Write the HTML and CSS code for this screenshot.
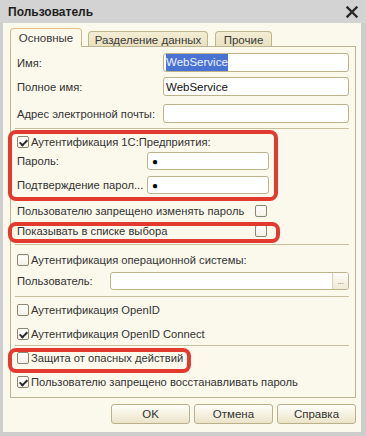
FILE: index.html
```html
<!DOCTYPE html>
<html lang="ru">
<head>
<meta charset="utf-8">
<title>Пользователь</title>
<link rel="stylesheet" href="styles.css">
</head>
<body>
<div class="window">
  <div class="titlebar">
    <span class="title">Пользователь</span>
    <svg class="close" width="12" height="12" viewBox="0 0 12 12"><path d="M1.5 1.5 L10.5 10.5 M10.5 1.5 L1.5 10.5" stroke="#2b2b2b" stroke-width="2.4" stroke-linecap="square"/></svg>
  </div>
  <div class="content">
    <div class="tabs">
      <div class="tab active">Основные</div>
      <div class="tab t2">Разделение данных</div>
      <div class="tab t3">Прочие</div>
    </div>
    <div class="panel">
      <div class="frow r1"><span class="label">Имя:</span><div class="input wide"><span class="sel">WebService</span></div></div>
      <div class="frow r2"><span class="label">Полное имя:</span><div class="input wide">WebService</div></div>
      <div class="frow r3"><span class="label">Адрес электронной почты:</span><div class="input wide"></div></div>
      <div class="sep s1"></div>
      <div class="crow r4"><span class="cb checked"></span><span>Аутентификация 1С:Предприятия:</span></div>
      <div class="frow r5"><span class="label">Пароль:</span><div class="input pwd"><span class="dot">●</span></div></div>
      <div class="frow r6"><span class="label">Подтверждение парол...</span><div class="input pwd"><span class="dot">●</span></div></div>
      <div class="crow lrow r7"><span class="ltext">Пользователю запрещено изменять пароль</span><span class="cb"></span></div>
      <div class="crow lrow r8"><span class="ltext">Показывать в списке выбора</span><span class="cb"></span></div>
      <div class="sep s2"></div>
      <div class="crow r9"><span class="cb"></span><span>Аутентификация операционной системы:</span></div>
      <div class="frow r10"><span class="label short">Пользователь:</span><div class="input os"><span class="fill"></span><span class="dots">...</span></div></div>
      <div class="sep s3"></div>
      <div class="crow r11"><span class="cb"></span><span>Аутентификация OpenID</span></div>
      <div class="crow r12"><span class="cb checked"></span><span>Аутентификация OpenID Connect</span></div>
      <div class="sep s4"></div>
      <div class="crow r13"><span class="cb"></span><span>Защита от опасных действий</span></div>
      <div class="crow r14"><span class="cb checked"></span><span>Пользователю запрещено восстанавливать пароль</span></div>
    </div>
    <div class="buttons">
      <div class="btn">OK</div>
      <div class="btn">Отмена</div>
      <div class="btn">Справка</div>
    </div>
  </div>
  <div class="mark m1"></div>
  <div class="mark m2"></div>
  <div class="mark m3"></div>
</div>
</body>
</html>
```
FILE: styles.css
```css
* { box-sizing: border-box; }
html, body { margin: 0; padding: 0; }
body {
  font-family: "Liberation Sans", Arial, sans-serif;
  font-size: 11.2px;
  color: #333;
  background: #ffffff;
}
.window {
  position: relative;
  width: 366px;
  height: 436px;
  background: #cdcdcd;
  padding: 0 5px 4px 3px;
  display: flex;
  flex-direction: column;
}
.titlebar {
  height: 23px;
  display: flex;
  align-items: center;
  justify-content: space-between;
  padding-top: 1px;
  background: #d3d3d3;
  margin: 0 -5px 0 -3px;
  padding-left: 8px;
  padding-right: 8px;
}
.title {
  font-weight: bold;
  font-size: 12px;
  color: #1e1e1e;
}
.close { display: block; }
.content {
  flex: 1;
  background: #fbf9ec;
  padding: 5px 5px 0 7px;
  display: flex;
  flex-direction: column;
}
.tabs {
  display: flex;
  align-items: flex-end;
  gap: 6px;
  height: 18px;
  position: relative;
  z-index: 1;
}
.tab {
  height: 15px;
  border: 1px solid #bdb58f;
  border-bottom: none;
  border-radius: 4px 4px 0 0;
  background: linear-gradient(#f3edd4, #e9e1c1);
  color: #3a3a3a;
  display: flex;
  align-items: center;
  justify-content: center;
  font-size: 11.5px;
  padding-top: 1px;
}
.tab.active {
  height: 19px;
  width: 72px;
  margin-bottom: -1px;
  background: #fbf9ec;
  border-color: #c9b98a;
  border-top: 1px solid #e2c27f;
  padding-top: 0;
}
.tab.t2 { width: 120px; }
.tab.t3 { width: 57px; margin-left: 1px; }
.panel {
  border: 1px solid #bdb58f;
  padding: 0 6px 7px 6px;
  display: flex;
  flex-direction: column;
  background: #fbf9ec;
}
.frow {
  display: flex;
  align-items: center;
  justify-content: space-between;
}
.label { white-space: nowrap; color: #333; }
.input {
  border: 1px solid #bcb38b;
  border-radius: 3px;
  background: #ffffff;
  height: 19px;
  display: flex;
  align-items: center;
  padding-left: 2px;
  color: #111;
  font-size: 11.5px;
}
.input.wide { width: 186px; }
.sel {
  background: #4a72d3;
  color: #eef2ff;
  padding: 1px 0 2px 0;
  line-height: 14px;
}
.input.pwd { width: 122px; height: 18px; margin-right: 80px; padding-left: 4px; }
.dot { font-size: 10px; color: #000; }
.input.os { width: 239px; height: 18px; padding: 0; overflow: hidden; }
.fill { flex: 1; }
.dots {
  width: 16px;
  height: 100%;
  border-left: 1px solid #d8d2b4;
  background: linear-gradient(#fdfcf6, #efead6);
  color: #9a9370;
  font-size: 9px;
  display: flex;
  align-items: flex-end;
  justify-content: center;
  padding-bottom: 3px;
  letter-spacing: -0.5px;
}
.crow {
  height: 16px;
  display: flex;
  align-items: center;
  gap: 2px;
  white-space: nowrap;
}
.lrow { justify-content: flex-start; }
.ltext { width: 236px; }
.cb {
  width: 12px;
  height: 12px;
  flex: none;
  border: 1px solid #8d8770;
  border-radius: 2px;
  background: linear-gradient(#ffffff, #f4f1e6);
  position: relative;
}
.cb.checked::after {
  content: "";
  position: absolute;
  left: 3px;
  top: 1px;
  width: 3px;
  height: 6px;
  border: solid #2a2a2a;
  border-width: 0 2px 2px 0;
  transform: rotate(45deg);
}
.sep {
  height: 1px;
  background: #c8c09c;
  margin-left: -2px;
}
.r1 { margin-top: 6px; }
.r2 { margin-top: 5px; }
.r3 { margin-top: 8px; }
.s1 { margin-top: 5px; }
.r4 { margin-top: 5px; }
.r5 { margin-top: 2px; }
.r6 { margin-top: 6px; }
.r7 { margin-top: 9px; }
.r8 { margin-top: 4px; }
.s2 { margin-top: 5px; }
.r9 { margin-top: 7px; }
.r10 { margin-top: 4px; }
.s3 { margin-top: 6px; }
.r11 { margin-top: 5px; }
.r12 { margin-top: 8px; }
.s4 { margin-top: 3px; }
.r13 { margin-top: 4px; }
.r14 { margin-top: 8px; }
.buttons {
  display: flex;
  justify-content: flex-end;
  gap: 4px;
  margin-top: 6px;
  padding-left: 101px;
}
.btn {
  width: 80px;
  height: 20px;
  border: 1px solid #bab18a;
  border-radius: 3px;
  background: linear-gradient(#fefefb, #f4efdc 60%, #ebe4c9);
  display: flex;
  align-items: center;
  justify-content: center;
  color: #333;
  font-size: 11.5px;
}
.mark {
  position: absolute;
  border: 4px solid #e23a2e;
  border-radius: 8px;
  pointer-events: none;
}
.m1 { left: 8px; top: 130px; width: 270px; height: 71px; }
.m2 { left: 8px; top: 222px; width: 272px; height: 21px; }
.m3 { left: 8px; top: 348px; width: 183px; height: 25px; }
```
